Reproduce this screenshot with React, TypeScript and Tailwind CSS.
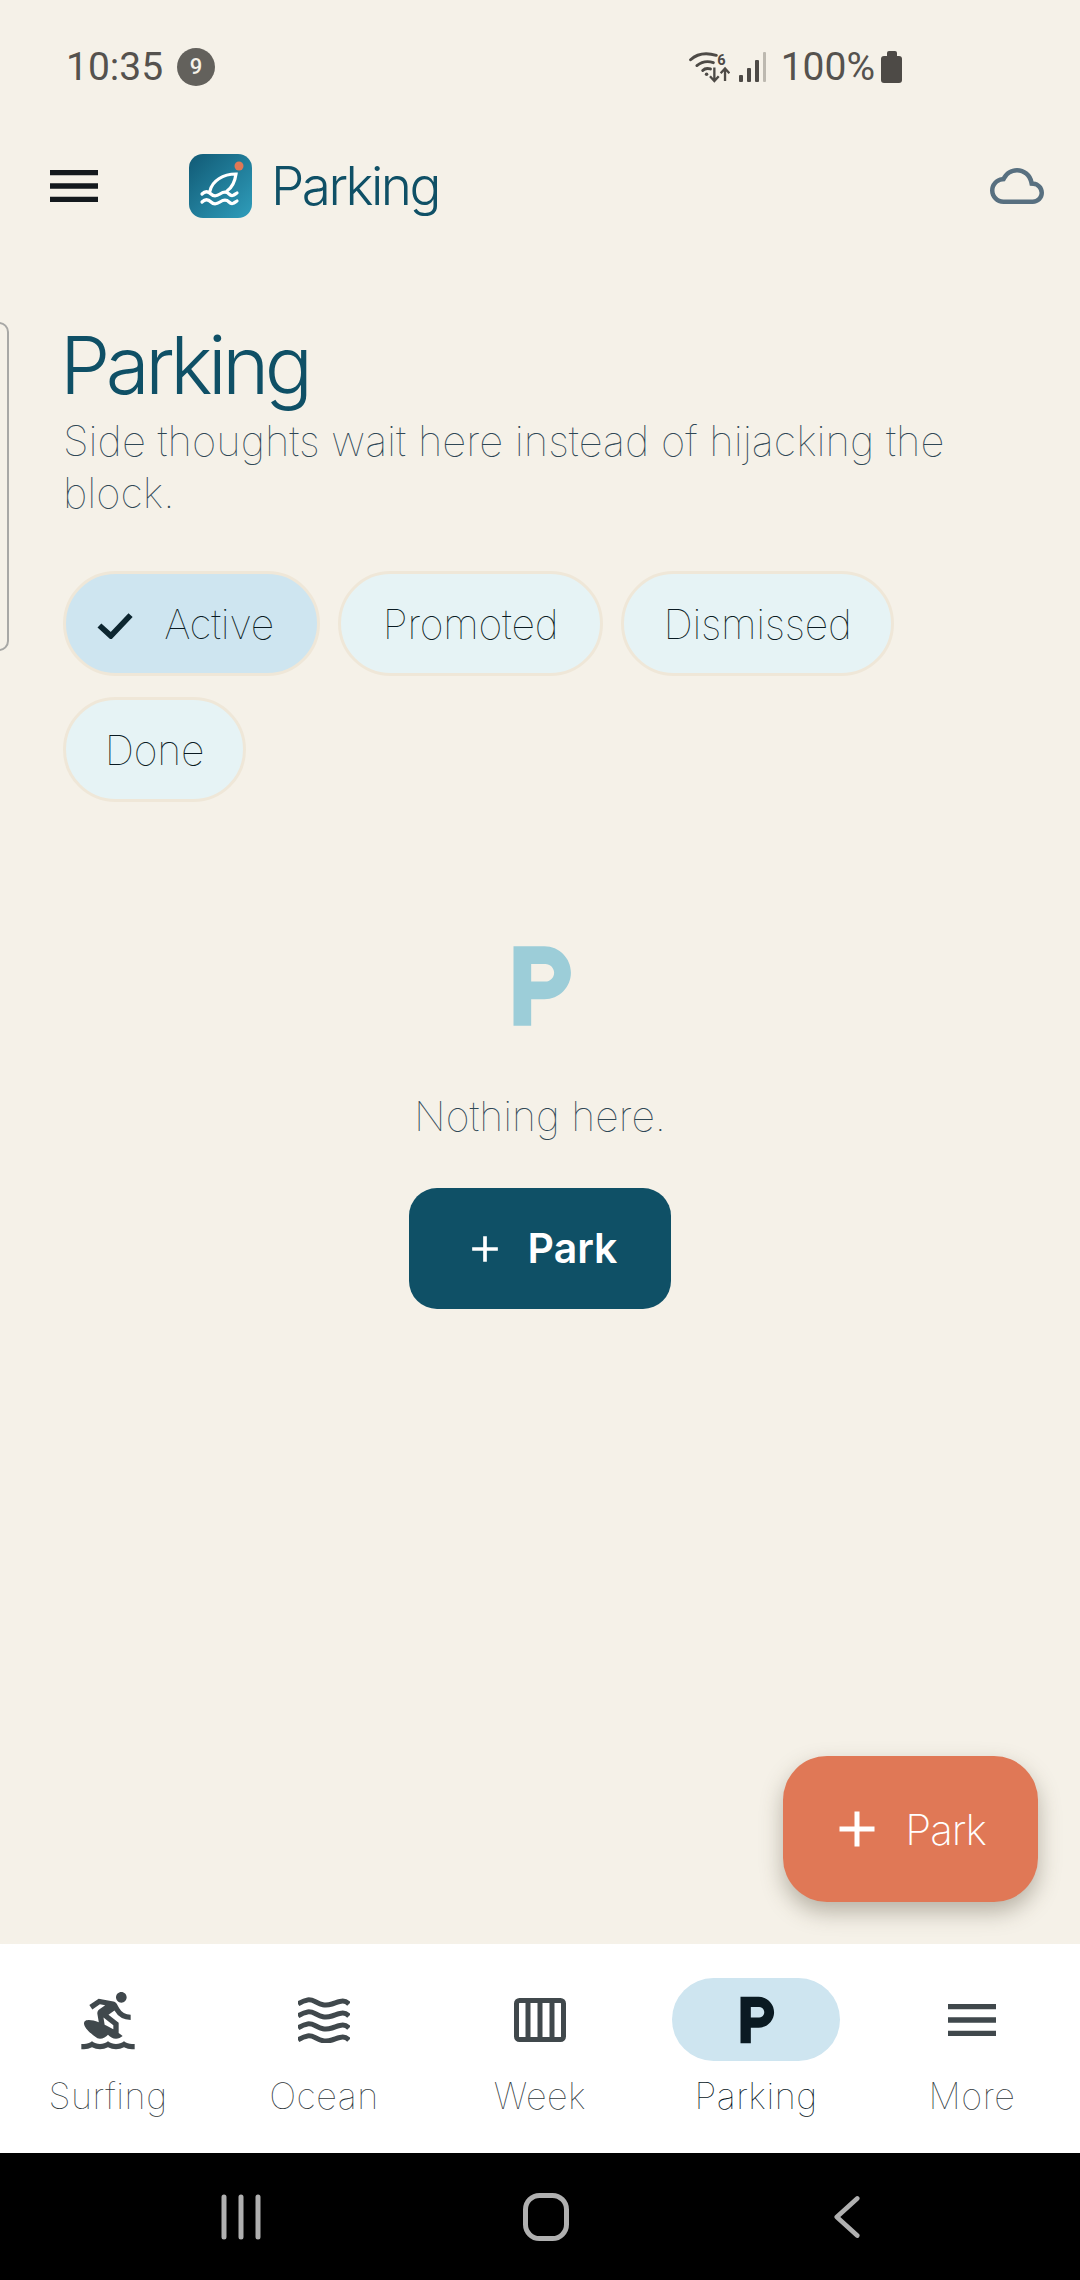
import { MdMenu, MdOutlineCloud, MdSurfing, MdAdd } from 'react-icons/md';

const inter = "font-['Inter',sans-serif]";

function ParkGlyph({ className }: { className: string }) {
  return (
    <svg viewBox="0 0 24 24" fill="currentColor" className={className}>
      <path d="M13 3H6v18h4v-6h3c3.31 0 6-2.69 6-6s-2.69-6-6-6zm.2 8H10V7h3.2c1.1 0 2 .9 2 2s-.9 2-2 2z" />
    </svg>
  );
}

function AppLogo() {
  return (
    <svg viewBox="0 0 63 64" className="w-[63px] h-[64px]">
      <defs>
        <linearGradient id="logoFill" x1="0" y1="0" x2="1" y2="1">
          <stop offset="0" stopColor="#115a75" />
          <stop offset="1" stopColor="#2f9dbb" />
        </linearGradient>
      </defs>
      <rect width="63" height="64" rx="14" fill="url(#logoFill)" />
      <circle cx="50" cy="12" r="4.5" fill="#e07856" />
      <path d="M21 37C23 27 34 20 47 20C46 27 44 33 38 37" fill="none" stroke="#fff" strokeWidth="3.200" strokeLinecap="round" />
      <path d="M13 40c3-3 6-3 9 0s6 2 9 0 6-3 9 0 5 1 8-1" fill="none" stroke="#fff" strokeWidth="3.200" strokeLinecap="round" />
      <path d="M13 48c3-3 6-3 9 0s6 2 9 0 6-3 9 0 5 1 8-1" fill="none" stroke="#fff" strokeWidth="3.200" strokeLinecap="round" />
    </svg>
  );
}

function WifiIcon() {
  return (
    <svg viewBox="0 0 42 34" className="w-[41px] h-[33px] text-[#4d4a46]" fill="none" stroke="currentColor">
      <path d="M1.5 9C8 3 18 1.5 28 4.5" strokeWidth="3" strokeLinecap="round" />
      <path d="M8 15c5-4 11-5 17-3" strokeWidth="3" strokeLinecap="round" />
      <path d="M14 20c2-2 5-2.500 8-1.500" strokeWidth="3" strokeLinecap="round" />
      <circle cx="18" cy="24" r="1.800" fill="currentColor" stroke="none" />
      <text x="29" y="14" fontSize="15" fontWeight="700" fontFamily="Roboto" fill="currentColor" stroke="none">6</text>
      <path d="M26 17v13M21.500 26l4.500 5 4.500-5" strokeWidth="2.400" />
      <path d="M37 31V18M32.500 23l4.500-5 4.500 5" strokeWidth="2.400" />
    </svg>
  );
}

function SignalIcon() {
  return (
    <div className="flex items-end gap-[4px] h-[30px]">
      <div className="w-[4px] h-[7px] bg-[#4d4a46] rounded-[1px]" />
      <div className="w-[4px] h-[14px] bg-[#4d4a46] rounded-[1px]" />
      <div className="w-[4px] h-[22px] bg-[#4d4a46] rounded-[1px]" />
      <div className="w-[3px] h-[30px] bg-[#bdb9b0] rounded-[1px]" />
    </div>
  );
}

function BatteryIcon() {
  return (
    <div className="flex flex-col items-center">
      <div className="w-[10px] h-[5px] bg-[#4d4a46] rounded-t-[2px]" />
      <div className="w-[21px] h-[27px] bg-[#4d4a46] rounded-[3px]" />
    </div>
  );
}

function StatusBar() {
  return (
    <div className="h-[130px] shrink-0 flex justify-between items-start pt-[46px] pl-[66px] pr-[178px] font-['Roboto',sans-serif] text-[#55524e] text-[39px] leading-[42px]">
      <div className="flex items-center gap-[14px]">
        <span>10:35</span>
        <span className="w-[38px] h-[38px] rounded-full bg-[#63615c] text-[#f5f1e8] text-[22px] font-medium flex items-center justify-center">9</span>
      </div>
      <div className="flex items-center">
        <WifiIcon />
        <div className="ml-[9px]"><SignalIcon /></div>
        <span className="ml-[15px]">100%</span>
        <div className="ml-[6px]"><BatteryIcon /></div>
      </div>
    </div>
  );
}

function Header() {
  return (
    <div className="h-[112px] shrink-0 flex items-center pl-[42px] pr-[36px]">
      <MdMenu className="w-[64px] h-[64px] text-[#14191d]" />
      <div className="ml-[83px]"><AppLogo /></div>
      <span className={`${inter} ml-[19px] mt-[2px] text-[53px] font-light tracking-[-2.5px] text-[#0f5066]`}>Parking</span>
      <MdOutlineCloud className="ml-auto w-[54px] h-[54px] text-[#587080]" />
    </div>
  );
}

function Chip({ label, active, className }: { label: string; active?: boolean; className: string }) {
  return (
    <div
      className={`h-[105px] pt-[3px] rounded-full border-[3px] border-[#efe7d8] flex items-center justify-center text-[41px] font-thin tracking-[-0.25px] text-[#0a1a22] ${
        active ? 'bg-[#cee5f0] pr-[12px]' : 'bg-[#e6f3f5]'
      } ${className}`}
    >
      {active && (
        <svg viewBox="0 0 34 26" className="w-[36px] h-[27px] mr-[31px] text-[#0d2630]" fill="none" stroke="currentColor" strokeWidth="5.500">
          <path d="M2 13l11 10L32 3" />
        </svg>
      )}
      {label}
    </div>
  );
}

function NavItem({ label, active, children }: { label: string; active?: boolean; children: React.ReactNode }) {
  return (
    <div className={`flex-1 flex flex-col items-center ${active ? 'text-[#0a1a22]' : 'text-[#40484c]'}`}>
      <div className={`w-[168px] h-[83px] rounded-full flex items-center justify-center ${active ? 'bg-[#cee5f0]' : ''}`}>
        {children}
      </div>
      <span className={`mt-[13px] text-[36px] leading-[44px] font-thin tracking-[0.5px] ${active ? 'text-[#05141b]' : 'text-[#2f373b]'}`}>{label}</span>
    </div>
  );
}

function OceanIcon() {
  const wave = 'c8-5 12-5 17-2.500s9 5 17 2.500 12-5 17 0';
  return (
    <svg viewBox="0 0 52 46" className="w-[52px] h-[46px]" fill="none" stroke="currentColor" strokeWidth="5">
      <path d={`M0 7${wave}`} />
      <path d={`M0 19${wave}`} />
      <path d={`M0 31${wave}`} />
      <path d={`M0 43${wave}`} />
    </svg>
  );
}

function WeekIcon() {
  return (
    <svg viewBox="0 0 52 44" className="w-[52px] h-[44px]" fill="none" stroke="currentColor" strokeWidth="5">
      <rect x="2.500" y="2.500" width="47" height="39" rx="3" />
      <path d="M14 3v38M26 3v38M38 3v38" strokeWidth="5" />
    </svg>
  );
}

export default function App() {
  return (
    <div className={`${inter} w-[1080px] h-[2280px] flex flex-col bg-[#f5f1e8] overflow-hidden`}>
      <StatusBar />
      <Header />

      <main className="relative flex-1 pt-[78px] px-[63px]">
        {/* drawer handle peeking in from the left edge */}
        <div className="absolute left-[-20px] top-[80px] w-[29px] h-[329px] rounded-[10px] border-2 border-[#a8a8a6]" />

        <h1 className="-ml-[3px] text-[80px] leading-[90px] font-light tracking-[-4.5px] text-[#0f5066]">Parking</h1>
        <p className="mt-[5px] text-[41.8px] leading-[52px] font-thin text-[#2f4755]">
          Side thoughts wait here instead of hijacking the block.
        </p>

        <div className="mt-[52px] flex flex-wrap gap-x-[18px] gap-y-[21px]">
          <Chip label="Active" active className="w-[257px]" />
          <Chip label="Promoted" className="w-[265px]" />
          <Chip label="Dismissed" className="w-[273px]" />
          <Chip label="Done" className="w-[183px]" />
        </div>

        <div className="mt-[131px] flex flex-col items-center">
          <ParkGlyph className="w-[106px] h-[106px] text-[#9ccdd8]" />
          <p className="mt-[51px] text-[41px] leading-[52px] font-thin text-[#2f4755]">Nothing here.</p>
          <button className="mt-[46px] w-[262px] h-[121px] rounded-[28px] bg-[#0f5066] text-white flex items-center justify-center gap-[21px] text-[41px] font-semibold">
            <MdAdd className="w-[44px] h-[44px]" />
            Park
          </button>
        </div>

        <button className="absolute right-[42px] bottom-[42px] w-[255px] h-[146px] pr-[8px] rounded-[44px] bg-[#e07856] text-white flex items-center justify-center gap-[18px] text-[42px] font-extralight tracking-[-1px] shadow-[0_10px_22px_rgba(70,60,40,0.35)]">
          <MdAdd className="w-[60px] h-[60px]" />
          Park
        </button>
      </main>

      <nav className="h-[209px] shrink-0 bg-white flex pt-[34px]">
        <NavItem label="Surfing"><MdSurfing className="w-[64px] h-[64px]" /></NavItem>
        <NavItem label="Ocean"><OceanIcon /></NavItem>
        <NavItem label="Week"><WeekIcon /></NavItem>
        <NavItem label="Parking" active><ParkGlyph className="w-[62px] h-[62px]" /></NavItem>
        <NavItem label="More"><MdMenu className="w-[64px] h-[64px]" /></NavItem>
      </nav>

      <div className="h-[127px] shrink-0 bg-black flex items-center justify-between pl-[221px] pr-[220px] text-[#b0b0b0]">
        <svg viewBox="0 0 40 46" className="w-[40px] h-[46px]" fill="none" stroke="currentColor" strokeWidth="5" strokeLinecap="round">
          <path d="M3 3v40M20 3v40M37 3v40" />
        </svg>
        <svg viewBox="0 0 46 48" className="w-[46px] h-[48px] -translate-x-[2px]" fill="none" stroke="currentColor" strokeWidth="5">
          <rect x="2.500" y="2.500" width="41" height="43" rx="14" />
        </svg>
        <svg viewBox="0 0 28 46" className="w-[26px] h-[46px]" fill="none" stroke="currentColor" strokeWidth="5" strokeLinecap="round" strokeLinejoin="round">
          <path d="M25 3L3 23l22 20" />
        </svg>
      </div>
    </div>
  );
}
